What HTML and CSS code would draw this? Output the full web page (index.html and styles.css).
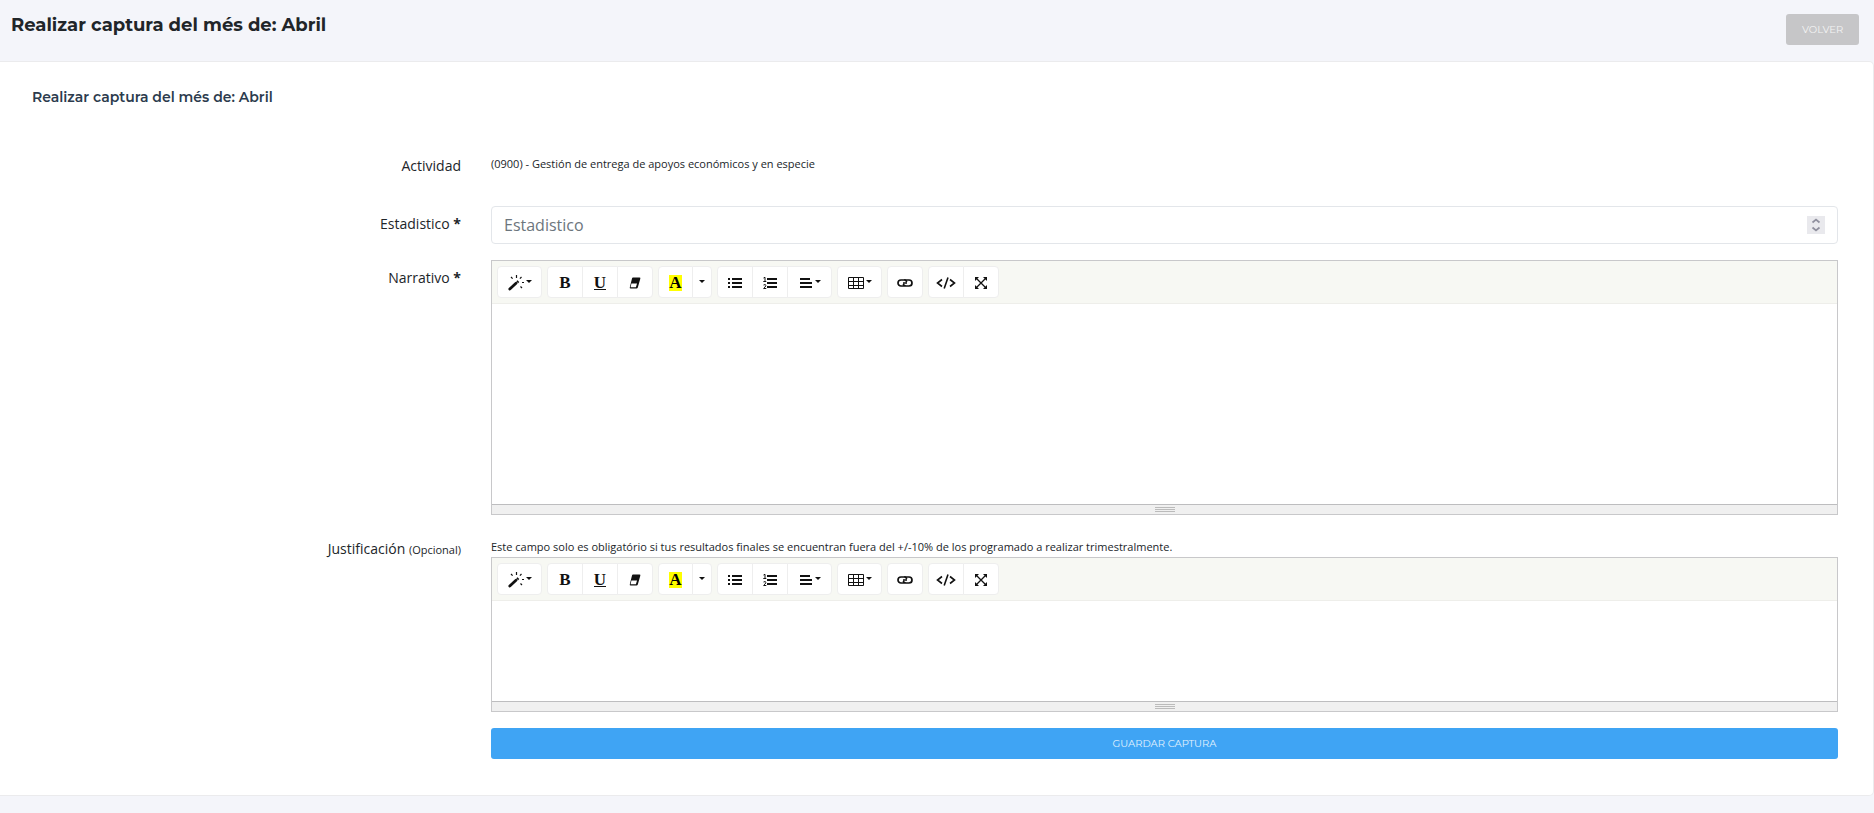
FILE: index.html
```
<!DOCTYPE html>
<html lang="es">
<head>
<meta charset="utf-8">
<title>Realizar captura del més de: Abril</title>
<link rel="stylesheet" href="styles.css">
</head>
<body>
<svg class="sprite" aria-hidden="true">
  <symbol id="i-magic" viewBox="0 0 16 16"><path d="M1.800 14 8 8.300" stroke="currentColor" stroke-width="2.800" stroke-linecap="round"/><path d="m9.200 7.200 1.200-1.100" stroke="currentColor" stroke-width="2.600"/><path d="M8.500 0v3M3 2l1.600 1.600M13.500 2l-1.600 1.600M14 7.500h2M12.500 11.500l1.500 1.500" stroke="currentColor" stroke-width="1.200"/></symbol>
  <symbol id="i-eraser" viewBox="0 0 14 14"><path d="M5 1.500h6.500q1.200 0 .8 1.200L9.800 11.500q-.3 1-1.300 1H2.700q-1.200 0-.9-1.200L4 2.500q.2-1 1-1z" fill="currentColor"/><path d="M3.400 7.500h5.600l-1.100 3.800H2.600z" fill="#fff"/></symbol>
  <symbol id="i-ul" viewBox="0 0 14 14"><path d="M0 3h2M0 7h2M0 11h2M4 3h10M4 7h10M4 11h10" stroke="currentColor" stroke-width="2"/></symbol>
  <symbol id="i-ol" viewBox="0 0 14 14"><path d="M4 3h10M4 7h10M4 11h10" stroke="currentColor" stroke-width="2"/><path d="M.5 2 2 1.300V6M.3 5.500h3M.5 9q2.500-1.200 2.300.5Q2.600 11 .6 12.500h2.700" stroke="currentColor" fill="none"/></symbol>
  <symbol id="i-align" viewBox="0 0 14 14"><path d="M1 3h10M1 7h12M1 11h12" stroke="currentColor" stroke-width="2"/></symbol>
  <symbol id="i-table" viewBox="0 0 16 14"><path d="M.5 1.500h15v11H.5zM.5 5.500h15M.5 9.500h15M5.500 1.500v11M10.500 1.500v11" stroke="currentColor" fill="none"/></symbol>
  <symbol id="i-link" viewBox="0 0 16 14"><path d="M8.500 9.500Q8 10 7 10H4a3 3 0 0 1 0-6h3q2 0 2.800 2M7.500 4.500Q8 4 9 4h3a3 3 0 0 1 0 6H9Q7 10 6.200 8M6 7h4" stroke="currentColor" stroke-width="1.700" fill="none"/></symbol>
  <symbol id="i-code" viewBox="0 0 20 14"><path d="M6 3.500 1.500 7 6 10.500M14 3.500 18.500 7 14 10.500M12 1.500 8.200 12.500" stroke="currentColor" stroke-width="1.600" fill="none"/></symbol>
  <symbol id="i-full" viewBox="0 0 14 14"><path d="m2.500 2.500 9 9M11.500 2.500l-9 9" stroke="currentColor" stroke-width="1.300"/><path d="M1 1h4L1 5zM13 1v4L9 1zM1 13V9l4 4zM13 13H9l4-4z" fill="currentColor"/></symbol>
</svg>

<header class="topbar">
  <h1 class="page-title">Realizar captura del més de: Abril</h1>
  <button type="button" class="btn btn-back">VOLVER</button>
</header>

<main class="card">
  <h2 class="card-title">Realizar captura del més de: Abril</h2>
  <form class="form">
    <div class="row row-activity">
      <span class="label">Actividad</span>
      <p class="note">(0900) - Gestión de entrega de apoyos económicos y en especie</p>
    </div>
    <div class="row row-number">
      <label class="label" for="estadistico">Estadistico <b>*</b></label>
      <div class="number">
        <input class="input" id="estadistico" type="number" placeholder="Estadistico">
        <svg class="spin" viewBox="0 0 18 18" aria-hidden="true"><path d="M0 0h18v18H0z" fill="#e9e9ed"/><path d="M5.500 6.500 9 3.500l3.500 3M5.500 11.500l3.500 3 3.500-3" fill="none" stroke="#8f8f9d" stroke-width="1.700"/></svg>
      </div>
    </div>
    <div class="row">
      <label class="label" for="narrativo">Narrativo <b>*</b></label>
      <div class="editor">
        <div class="toolbar">
          <div class="group"><button type="button" class="tool wide" aria-label="Estilo"><svg class="ic16"><use href="#i-magic"/></svg><i class="caret"></i></button></div>
          <div class="group"><button type="button" class="tool letter">B</button><button type="button" class="tool letter"><span class="under">U</span></button><button type="button" class="tool" aria-label="Borrar formato"><svg class="ic14"><use href="#i-eraser"/></svg></button></div>
          <div class="group"><button type="button" class="tool letter color"><span class="mark">A</span></button><button type="button" class="tool narrow" aria-label="Más colores"><i class="caret"></i></button></div>
          <div class="group"><button type="button" class="tool" aria-label="Lista"><svg class="ic14"><use href="#i-ul"/></svg></button><button type="button" class="tool" aria-label="Lista numerada"><svg class="ic14"><use href="#i-ol"/></svg></button><button type="button" class="tool wide" aria-label="Párrafo"><svg class="ic14"><use href="#i-align"/></svg><i class="caret"></i></button></div>
          <div class="group"><button type="button" class="tool wide" aria-label="Tabla"><svg class="ic16"><use href="#i-table"/></svg><i class="caret"></i></button></div>
          <div class="group"><button type="button" class="tool" aria-label="Enlace"><svg class="ic16"><use href="#i-link"/></svg></button></div>
          <div class="group"><button type="button" class="tool" aria-label="Código"><svg class="ic20"><use href="#i-code"/></svg></button><button type="button" class="tool" aria-label="Pantalla completa"><svg class="ic14"><use href="#i-full"/></svg></button></div>
        </div>
        <textarea class="area tall" id="narrativo"></textarea>
        <div class="grip"><i></i><i></i><i></i></div>
      </div>
    </div>
    <div class="row row-optional">
      <label class="label" for="justificacion">Justificación <small>(Opcional)</small></label>
      <div>
        <p class="note">Este campo solo es obligatório si tus resultados finales se encuentran fuera del +/-10% de los programado a realizar trimestralmente.</p>
        <div class="editor">
          <div class="toolbar">
            <div class="group"><button type="button" class="tool wide" aria-label="Estilo"><svg class="ic16"><use href="#i-magic"/></svg><i class="caret"></i></button></div>
            <div class="group"><button type="button" class="tool letter">B</button><button type="button" class="tool letter"><span class="under">U</span></button><button type="button" class="tool" aria-label="Borrar formato"><svg class="ic14"><use href="#i-eraser"/></svg></button></div>
            <div class="group"><button type="button" class="tool letter color"><span class="mark">A</span></button><button type="button" class="tool narrow" aria-label="Más colores"><i class="caret"></i></button></div>
            <div class="group"><button type="button" class="tool" aria-label="Lista"><svg class="ic14"><use href="#i-ul"/></svg></button><button type="button" class="tool" aria-label="Lista numerada"><svg class="ic14"><use href="#i-ol"/></svg></button><button type="button" class="tool wide" aria-label="Párrafo"><svg class="ic14"><use href="#i-align"/></svg><i class="caret"></i></button></div>
            <div class="group"><button type="button" class="tool wide" aria-label="Tabla"><svg class="ic16"><use href="#i-table"/></svg><i class="caret"></i></button></div>
            <div class="group"><button type="button" class="tool" aria-label="Enlace"><svg class="ic16"><use href="#i-link"/></svg></button></div>
            <div class="group"><button type="button" class="tool" aria-label="Código"><svg class="ic20"><use href="#i-code"/></svg></button><button type="button" class="tool" aria-label="Pantalla completa"><svg class="ic14"><use href="#i-full"/></svg></button></div>
          </div>
          <textarea class="area short" id="justificacion"></textarea>
          <div class="grip"><i></i><i></i><i></i></div>
        </div>
      </div>
    </div>
    <div class="row">
      <button type="submit" class="btn btn-save">GUARDAR CAPTURA</button>
    </div>
  </form>
</main>
</body>
</html>
```
FILE: styles.css
```
* { box-sizing: border-box; }
body {
  margin: 0;
  background: #f4f5fa;
  color: #212529;
  font: 14px/20px "Open Sans", sans-serif;
}
h1, h2, p { margin: 0; }
.sprite { display: none; }

.topbar {
  display: flex;
  justify-content: space-between;
  align-items: flex-start;
  padding: 14px 15px 16px 11px;
}
.page-title { font: 700 18px/22px Montserrat, Inter, sans-serif; }
.btn {
  height: 31px;
  padding: 0 16px;
  border: 0;
  border-radius: 3px;
  color: #fff;
  font: 400 10px/15px Montserrat, Inter, sans-serif;
}
.btn-back { width: 73px; background: #c6c6c8; color: #f4f4f4; }

.card {
  padding: 24px 35px 36px 32px;
  background: #fff;
  border: 1px solid #ebebed;
  border-left: 0;
  border-radius: 0 5px 5px 0;
}
.card-title {
  color: #2c3b4d;
  font: 600 14px/22px Montserrat, Inter, sans-serif;
}
.form { padding-top: 40px; }
.row {
  display: grid;
  grid-template-columns: 429fr 1347fr;
  column-gap: 30px;
}
.row > * { min-width: 0; }
.label { padding-top: 8px; text-align: right; }
.label small { font-size: 11px; }
.note { font-size: 11px; line-height: 21px; }
.row-activity { min-height: 58px; }
.row-activity .note { padding-top: 5px; }
.row-number { margin-bottom: 16px; }
.number { position: relative; }
.input {
  display: block;
  width: 100%;
  height: 38px;
  padding: 6px 12px;
  border: 1px solid #e3e6ea;
  border-radius: 4px;
  font: 16px/24px "Open Sans", sans-serif;
  appearance: textfield;
}
.input::placeholder { color: #6c757d; opacity: 1; }
.input::-webkit-inner-spin-button { appearance: none; margin: 0; }
.spin { position: absolute; right: 13px; top: 10px; width: 18px; height: 18px; }

.editor { border: 1px solid #c8c8ca; }
.toolbar {
  display: flex;
  gap: 5px;
  padding: 5px;
  background: #f7f8f3;
  border-bottom: 1px solid #eeeeea;
}
.group { display: flex; }
.tool {
  display: flex;
  align-items: center;
  justify-content: center;
  width: 36px;
  height: 32px;
  padding: 2px 0 0;
  border: 1px solid #eeeeee;
  background: #fff;
  color: #111;
}
.tool + .tool { margin-left: -1px; }
.tool:first-child { border-radius: 4px 0 0 4px; }
.tool:last-child { border-radius: 0 4px 4px 0; }
.tool:only-child { border-radius: 4px; }
.wide { width: 45px; gap: 2px; }
.color { width: 35px; }
.narrow { width: 20px; }
.letter { font: 700 17px/16px "Liberation Serif", serif; }
.under { border-bottom: 1px solid #111; line-height: 12px; }
.mark { display: block; height: 16px; background: #ff0; color: #000; }
.ic14 { width: 14px; height: 14px; }
.ic16 { width: 16px; height: 16px; }
.ic20 { width: 20px; height: 14px; }
.caret {
  margin-bottom: 4px;
  border: 3px solid transparent;
  border-top-color: #111;
  border-bottom: 0;
}
.area {
  display: block;
  width: 100%;
  padding: 10px;
  border: 0;
  resize: none;
  outline: 0;
  font: inherit;
}
.tall { height: 200px; }
.short { height: 100px; }
.grip {
  display: flex;
  flex-direction: column;
  align-items: center;
  gap: 1px;
  height: 10px;
  padding-top: 2px;
  background: #f0f0f0;
  border-top: 1px solid #bdbdbf;
}
.grip i { width: 20px; height: 1px; background: #bbb; }
.row-optional { margin: 21px 0 16px; }
.row-optional .label { padding-top: 3px; }
.btn-save { grid-column: 2; background: #3fa4f4; color: #e3f2fd; }
```
